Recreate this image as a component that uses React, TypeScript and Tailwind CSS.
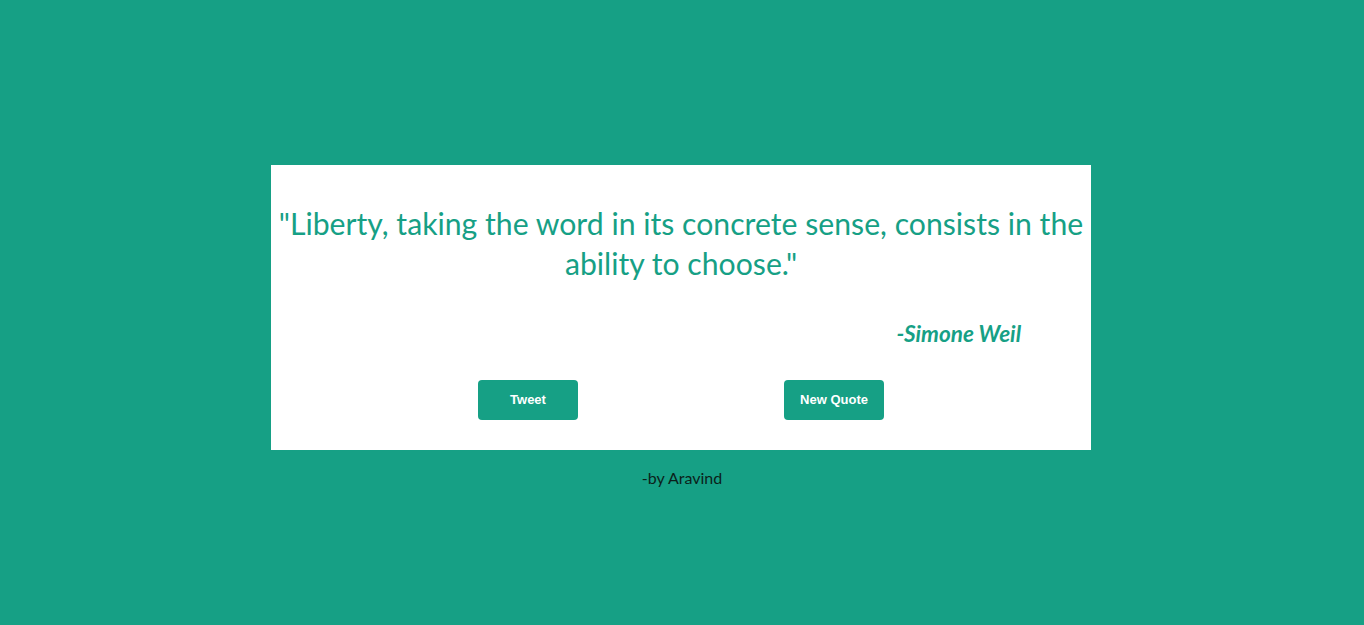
import React from 'react';

const quote = {
  text: 'Liberty, taking the word in its concrete sense, consists in the ability to choose.',
  author: 'Simone Weil',
};

const App: React.FC = () => {
  return (
    <div className="min-h-[625px] w-full bg-[#16a085] flex flex-col items-center pt-[165px]" style={{ fontFamily: 'Lato, "Open Sans", sans-serif' }}>
      {/* Карточка цитаты */}
      <div className="w-[820px] mr-[2px] bg-white flex flex-col pt-[38px] pb-[30px]">
        <p className="px-1 text-center text-[30.2px] leading-[40px] text-[#16a085]">
          "{quote.text}"
        </p>
        <div className="mt-[36px] pr-[70px] text-right text-[22.5px] leading-[30px] font-bold italic text-[#16a085]">
          -{quote.author}
        </div>
        <div className="mt-[31px] flex justify-center gap-[206px]" style={{ fontFamily: '"Liberation Sans", Arial, sans-serif' }}>
          <button className="w-[100px] h-[40px] rounded-[4px] bg-[#16a085] text-white text-[13px] font-bold">
            Tweet
          </button>
          <button className="w-[100px] h-[40px] rounded-[4px] bg-[#16a085] text-white text-[13px] font-bold">
            New Quote
          </button>
        </div>
      </div>
      <div className="mt-[18px] text-[16px] leading-[20px] text-[#0b1f1a]">-by Aravind</div>
    </div>
  );
};

export default App;
